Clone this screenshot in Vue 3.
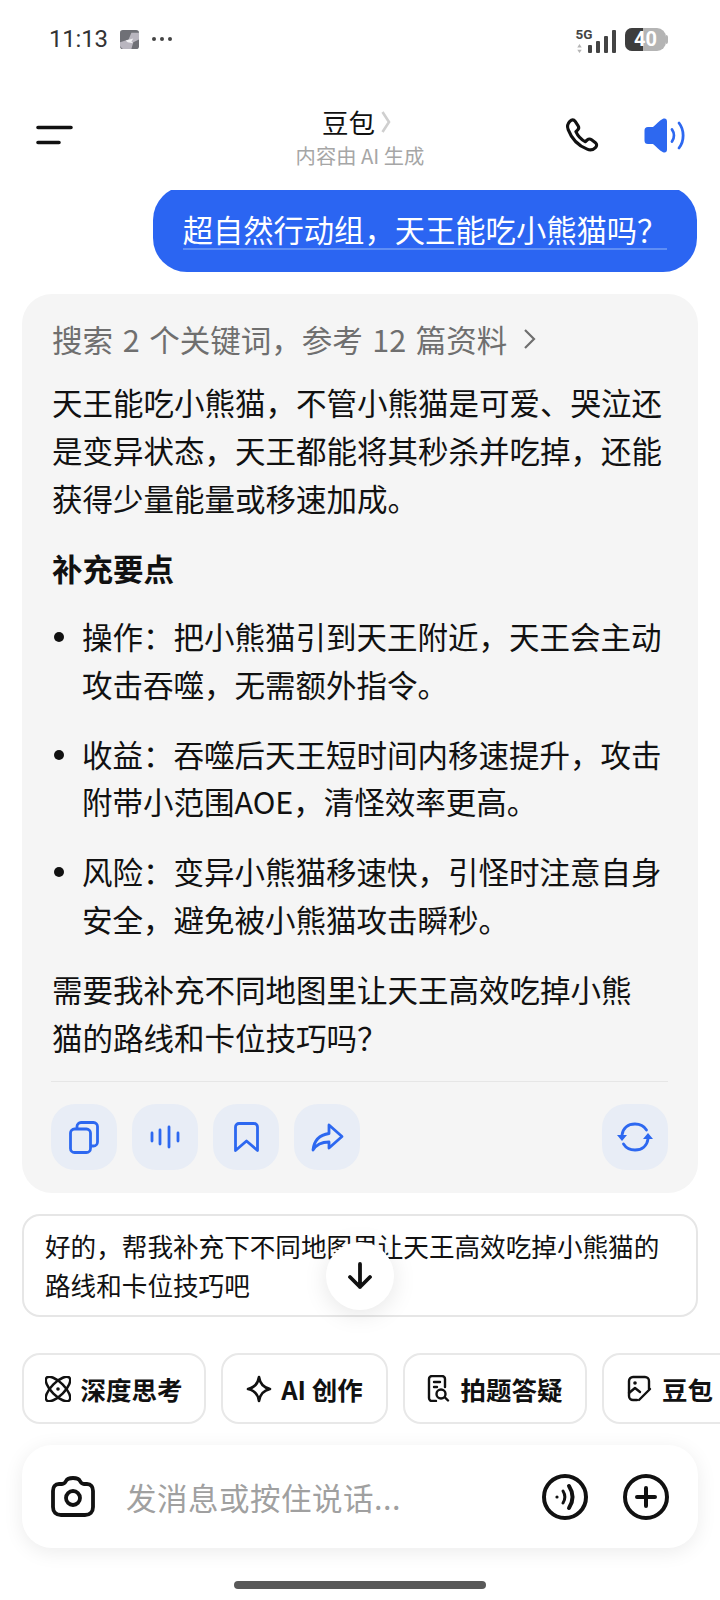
<script setup>
const bullets = [
  { label: '操作', lines: ['把小熊猫引到天王附近，天王会主动', '攻击吞噬，无需额外指令。'] },
  { label: '收益', lines: ['吞噬后天王短时间内移速提升，攻击', '附带小范围AOE，清怪效率更高。'] },
  { label: '风险', lines: ['变异小熊猫移速快，引怪时注意自身', '安全，避免被小熊猫攻击瞬秒。'] }
]
</script>

<template>
  <div class="screen">
    <div class="status">
      <div class="status-left">
        <span class="time">11:13</span>
        <span class="thumb"><svg width="19" height="19" viewBox="0 0 20 20"><path d="M3 0h14a3 3 0 0 1 3 3v14a3 3 0 0 1-3 3H3a3 3 0 0 1-3-3V3a3 3 0 0 1 3-3z" fill="#6f7076"/><path d="M0 13l9-3 3-7 8 0v7l-6 3-2 7H3l-3-3z" fill="#b9b6bf"/><path d="M6 11l8-2-2 3 2 2-6-1z" fill="#f2f2f4"/></svg></span>
        <span class="dots"><i></i><i></i><i></i></span>
      </div>
      <div class="status-right">
        <div class="net">
          <div class="net-label"><b>5G</b><svg width="5" height="9" viewBox="0 0 6 12"><path d="M3 0l3 4.500H0zM3 12L0 7.500h6z" fill="#b5b5b5"/></svg></div>
          <div class="bars"><i style="height:8px"></i><i style="height:12px"></i><i style="height:17px"></i><i style="height:23px"></i></div>
        </div>
        <div class="battery"><div class="battery-fill"></div><span>40</span></div>
      </div>
    </div>

    <div class="header">
      <svg class="menu" width="38" height="20" viewBox="0 0 38 20"><path d="M2 2.500h33M2 17.500h21" stroke="#111" stroke-width="3.600" stroke-linecap="round"/></svg>
      <div class="title">
        <div class="title-main">豆包<svg width="10" height="22" viewBox="0 0 10 22"><path d="M1.500 1l6.500 10-6.500 10" fill="none" stroke="#cfcfcf" stroke-width="2.600"/></svg></div>
        <div class="title-sub">内容由 AI 生成</div>
      </div>
      <div class="header-icons">
        <svg class="phone" width="37" height="37" viewBox="0 0 38 38"><path d="M6 4.500c2-2 4-2 5.500 0l3 4.500c1 1.600.7 3.200-.6 4.400l-1.700 1.600c1.800 4 5 7.800 9.600 10.400l2-1.800c1.400-1.200 3-1.300 4.500-.2l4 3c1.700 1.400 1.600 3.500 0 5-2.400 2.400-5.500 3-8.500 1.600C14.500 29.500 7.500 21.500 4.300 13 3 9.800 3.700 6.800 6 4.500z" fill="none" stroke="#111" stroke-width="3.200" stroke-linejoin="round"/></svg>
        <svg width="41" height="35" viewBox="0 0 41 35"><path d="M19 .8c2.500-1 4 .4 4 2.700v28c0 2.300-1.500 3.700-4 2.700-4-1.700-7-6-10-8.200H4a3.500 3.500 0 0 1-3.500-3.500V12.500A3.500 3.500 0 0 1 4 9h5c3-2.200 6-6.500 10-8.200z" fill="#2d68f0"/><path d="M28 11.500c2.500 3.500 2.500 8.500 0 12M35 5c5.500 7 5.500 18 0 25" fill="none" stroke="#2d68f0" stroke-width="2.800" stroke-linecap="round"/></svg>
      </div>
    </div>

    <div class="chat">
      <div class="bubble"><span>超自然行动组，天王能吃小熊猫吗？</span></div>

      <div class="card">
        <div class="search">搜索 2 个关键词，参考 12 篇资料<svg width="14" height="22" viewBox="0 0 14 22"><path d="M2 2l9 9-9 9" fill="none" stroke="#6f6f6f" stroke-width="2.200"/></svg></div>
        <p class="para">天王能吃小熊猫，不管小熊猫是可爱、哭泣还<br>是变异状态，天王都能将其秒杀并吃掉，还能<br>获得少量能量或移速加成。</p>
        <h3 class="subhead">补充要点</h3>
        <ul class="list">
          <li v-for="b in bullets" :key="b.label" class="item">
            <span class="dot"></span>
            <div>{{ b.label }}：{{ b.lines[0] }}<br>{{ b.lines[1] }}</div>
          </li>
        </ul>
        <p class="para closing">需要我补充不同地图里让天王高效吃掉小熊<br>猫的路线和卡位技巧吗？</p>
        <div class="actions">
          <button class="act"><svg width="30" height="33" viewBox="0 0 30 33" fill="none" stroke="#2d68f0" stroke-width="2.800" stroke-linejoin="round"><rect x="1.500" y="8" width="20" height="23.500" rx="4"/><path d="M8 8V5.500a4 4 0 0 1 4-4h12.500a4 4 0 0 1 4 4V21a4 4 0 0 1-4 4h-3"/></svg></button>
          <button class="act"><svg width="30" height="24" viewBox="0 0 30 24" fill="none" stroke="#2d68f0" stroke-width="2.800" stroke-linecap="round"><path d="M2 8v8M10 5v14M19 2v20M28 8v8"/></svg></button>
          <button class="act"><svg width="25" height="30" viewBox="0 0 25 30" fill="none" stroke="#2d68f0" stroke-width="2.800" stroke-linejoin="round"><path d="M1.500 5a3.500 3.500 0 0 1 3.500-3.500h15A3.500 3.500 0 0 1 23.500 5v23.500L12.500 19l-11 9.500z"/></svg></button>
          <button class="act"><svg width="33" height="29" viewBox="0 0 33 29" fill="none" stroke="#2d68f0" stroke-width="2.800" stroke-linejoin="round"><path d="M18 2l13 11.500L18 25v-6C11 19 5 22 2 27c1-9 6-15 16-16.500z"/></svg></button>
          <button class="act last"><svg width="36" height="30" viewBox="0 0 36 30" fill="none" stroke="#2d68f0" stroke-width="2.800" stroke-linecap="round"><path d="M5 13C6 6 11 2 18 2c5 0 9 2 11.500 6M31 17c-1 7-6 11-13 11-5 0-9-2-11.500-6"/><path d="M0 13h10l-5 6zM36 17H26l5-6z" fill="#2d68f0" stroke="none"/></svg></button>
        </div>
      </div>

      <div class="suggest">好的，帮我补充下不同地图里让天王高效吃掉小熊猫的<br>路线和卡位技巧吧</div>
      <div class="scroll-down"><svg width="26" height="30" viewBox="0 0 26 30" fill="none" stroke="#111" stroke-width="3.800" stroke-linecap="round" stroke-linejoin="round"><path d="M13 3v23M3 16l10 10 10-10"/></svg></div>
    </div>

    <div class="chips">
      <div class="chip c1"><svg width="26" height="26" viewBox="0 0 26 26" fill="none" stroke="#111" stroke-width="2.500"><ellipse cx="13" cy="13" rx="6.500" ry="16" transform="rotate(-45 13 13)"/><ellipse cx="13" cy="13" rx="6.500" ry="16" transform="rotate(45 13 13)"/><circle cx="13" cy="13" r="1.800" fill="#111" stroke="none"/></svg>深度思考</div>
      <div class="chip c2"><svg width="26" height="28" viewBox="0 0 26 28" fill="none" stroke="#111" stroke-width="2.600" stroke-linejoin="round"><path d="M13 2c1 7 4 10.500 11 12-7 1.500-10 5-11 12-1-7-4-10.500-11-12 7-1.500 10-5 11-12z"/></svg>AI 创作</div>
      <div class="chip c3"><svg width="24" height="27" viewBox="0 0 24 27" fill="none" stroke="#111" stroke-width="2.400" stroke-linecap="round"><path d="M9 26H5a3 3 0 0 1-3-3V4a3 3 0 0 1 3-3h10a3 3 0 0 1 3 3v8M7 7h6M7 12h3"/><circle cx="14" cy="19" r="4.500"/><path d="M18 22.500l3 3"/></svg>拍题答疑</div>
      <div class="chip c4"><svg width="26" height="27" viewBox="0 0 26 27" fill="none" stroke="#111" stroke-width="2.400" stroke-linecap="round" stroke-linejoin="round"><path d="M10 25H6a4 4 0 0 1-4-4V6a4 4 0 0 1 4-4h12a4 4 0 0 1 4 4v8"/><path d="M2 18l6-5 5 4M12 25l11-11"/><circle cx="8" cy="8" r="1.800" fill="#111" stroke="none"/></svg>豆包</div>
    </div>

    <div class="input">
      <svg width="44" height="41" viewBox="0 0 44 41" fill="none" stroke="#111" stroke-width="3.800" stroke-linejoin="round"><path d="M8 8h3c2 0 3-1 4-3s3-3 7-3 6 1 7 3 2 3 4 3h3c4 0 6 3 6 7v16c0 5-3 8-8 8H10c-5 0-8-3-8-8V15c0-4 2-7 6-7z"/><circle cx="22" cy="22" r="7"/></svg>
      <span class="placeholder">发消息或按住说话...</span>
      <svg class="voice" width="46" height="46" viewBox="0 0 46 46" fill="none" stroke="#111" stroke-width="4" stroke-linecap="round"><circle cx="23" cy="23" r="21"/><circle cx="15" cy="23" r="1.600" fill="#111" stroke="none"/><path d="M21 17c2.500 4 2.500 8 0 12" stroke-width="3"/><path d="M27 12c4.500 7 4.500 15 0 22"/></svg>
      <svg class="plus" width="46" height="46" viewBox="0 0 46 46" fill="none" stroke="#111" stroke-width="4" stroke-linecap="round"><circle cx="23" cy="23" r="21"/><path d="M23 14v18M14 23h18"/></svg>
    </div>

    <div class="home-wrap"><div class="home"></div></div>
  </div>
</template>

<style>
html, body { margin: 0; background: #fff; }
</style>

<style scoped>
.screen {
  width: 720px; height: 1600px; overflow: hidden; position: relative; background: #fff;
  display: flex; flex-direction: column; color: #111;
  font-family: "Noto Sans CJK SC", "Noto Sans", sans-serif;
}
.status { height: 78px; display: flex; justify-content: space-between; align-items: center; padding: 0 54px 0 49px; box-sizing: border-box; }
.status-left { display: flex; align-items: center; }
.time { font-family: "Roboto", sans-serif; font-size: 24px; letter-spacing: -.2px; color: #333; width: 71px; }
.thumb { display: flex; width: 19px; }
.dots { display: flex; gap: 4px; margin-left: 13px; }
.dots i { width: 4px; height: 4px; border-radius: 50%; background: #444; }
.status-right { display: flex; align-items: center; gap: 9px; }
.net { display: flex; align-items: flex-end; height: 27px; }
.net-label { display: flex; flex-direction: column; align-items: flex-start; width: 12px; }
.net-label svg { margin: 0 0 0 1px; }
.net-label b { font: 700 13.500px/13px "Roboto", sans-serif; color: #444; margin-bottom: 3px; white-space: nowrap; }
.bars { display: flex; align-items: flex-end; gap: 3.500px; }
.bars i { width: 4.500px; background: #444; border-radius: 1px; }
.battery { width: 41px; height: 23px; position: relative; border-radius: 7px 9px 9px 7px; background: #b4b4b4; overflow: visible; display: flex; align-items: center; justify-content: center; }
.battery::after { content: ""; position: absolute; right: -2px; top: 7px; width: 2px; height: 9px; border-radius: 0 2px 2px 0; background: #b4b4b4; }
.battery-fill { position: absolute; inset: 0 23px 0 0; background: #3d3d3d; border-radius: 7px 0 0 7px; }
.battery span { position: relative; color: #fff; font: 700 20px "Roboto", sans-serif; }

.header { height: 112px; display: flex; align-items: center; position: relative; padding: 0 35px 0 36px; }
.menu { margin-top: 2px; }
.title { position: absolute; left: 0; right: 0; top: 25px; text-align: center; }
.title-main { font-size: 26.500px; line-height: 38px; display: flex; justify-content: center; align-items: center; gap: 6px; padding-right: 7px; }
.title-sub { font-size: 20.300px; line-height: 28px; color: #a6a6a6; }
.header-icons { margin-left: auto; display: flex; align-items: center; gap: 43px; margin-top: 3px; }
.phone { margin-left: -1px; }

.chat { flex: 0 0 1163px; position: relative; overflow: hidden; padding: 0 22px; box-sizing: border-box; }
.bubble { margin: -4px 1px 0 131px; height: 86px; border-radius: 34px; background: #2b65f2; color: #fff; font-size: 30.300px; display: flex; align-items: center; justify-content: center; box-sizing: border-box; padding-top: 2px; }
.bubble span { border-bottom: 2.500px solid #5f8ef5; line-height: 38px; display: inline-block; }

.card { margin-top: 22px; height: 899px; box-sizing: border-box; background: #f5f5f5; border-radius: 30px; padding: 0 30px; display: flex; flex-direction: column; }
.search { font-size: 30.500px; word-spacing: 2.800px; color: #6f6f6f; height: 36px; line-height: 36px; margin-top: 27px; display: flex; align-items: center; gap: 16px; white-space: nowrap; }
.para { margin: 0; font-size: 30.500px; line-height: 48px; white-space: nowrap; }
.search + .para { margin-top: 21px; }
.subhead { margin: 22px 0 0; font-size: 30.500px; line-height: 48px; font-weight: 700; }
.list { list-style: none; padding: 0; margin: 21px 0 0; display: flex; flex-direction: column; gap: 22.500px; }
.item { display: flex; font-size: 30.500px; line-height: 47.500px; white-space: nowrap; }
.dot { flex: 0 0 10px; height: 10px; width: 10px; border-radius: 50%; background: #111; margin: 19px 18px 0 2px; }
.closing { margin-top: 22px; }
.actions { margin: 20px 0 0 -1px; padding-top: 22px; border-top: 1px solid #e6e6e6; display: flex; gap: 15px; }
.act { width: 66px; height: 66px; border: 0; padding: 0; border-radius: 24px; background: #e8edf6; display: flex; align-items: center; justify-content: center; }
.act.last { margin-left: auto; }

.suggest { margin-top: 21px; height: 103px; box-sizing: border-box; border: 2px solid #e6e6e6; border-radius: 18px; padding: 10px 21px; font-size: 25.600px; line-height: 39px; background: #fff; white-space: nowrap; }
.scroll-down { position: absolute; left: 326px; top: 1052px; width: 68px; height: 68px; border-radius: 50%; background: #fff; box-shadow: 0 4px 24px rgba(0,0,0,.1); display: flex; align-items: center; justify-content: center; }

.chips { display: flex; gap: 15px; padding-left: 22px; height: 71px; box-sizing: border-box; }
.chip { flex: none; box-sizing: border-box; height: 71px; border: 2px solid #e8e8e8; border-radius: 18px; display: flex; align-items: center; justify-content: center; gap: 9px; font-size: 25.500px; font-weight: 700; background: #fff; white-space: nowrap; }
.c1 { width: 184px; }
.c2 { width: 167px; }
.c3 { width: 184px; }
.c4 { width: 140px; justify-content: flex-start; padding-left: 23px; }

.input { margin: 21px 22px 0; height: 103px; border-radius: 30px; background: #fff; box-shadow: 0 4px 20px rgba(0,0,0,.08); display: flex; align-items: center; padding: 0 29px; box-sizing: border-box; }
.placeholder { font-size: 30.500px; letter-spacing: .5px; color: #a0a0a0; margin-left: 31px; flex: 1; }
.voice { margin-right: 35px; }

.home-wrap { flex: 1; display: flex; justify-content: center; padding-top: 33px; box-sizing: border-box; }
.home { width: 252px; height: 8px; border-radius: 4px; background: #595959; }
</style>
